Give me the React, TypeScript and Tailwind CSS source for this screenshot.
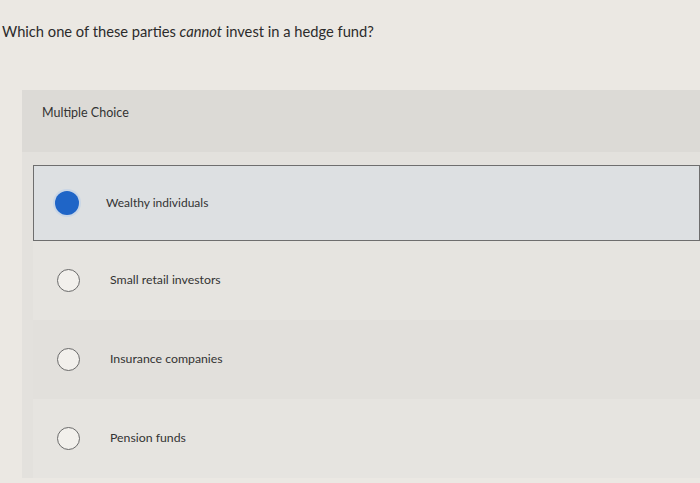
const options = [
  "Wealthy individuals",
  "Small retail investors",
  "Insurance companies",
  "Pension funds",
];

const App = () => {
  const selected = 0;
  return (
    <div
      className="w-[700px] h-[483px] overflow-hidden bg-[#ebe8e3] text-[#2b2b2b]"
      style={{ fontFamily: "Lato, 'Open Sans', sans-serif" }}
    >
      <h1 className="pl-[2px] pt-[20px] text-[14.7px] leading-[22px]">
        Which one of these parties <em>cannot</em> invest in a hedge fund?
      </h1>
      <div className="mt-[48px] ml-[22px] bg-[#e3e1dd]">
        <div className="h-[62px] bg-[#dcdad6] pl-[20px] pt-[14px] text-[12.5px] text-[#333]">
          Multiple Choice
        </div>
        <div className="pt-[13px]">
          {options.map((label, i) =>
            i === selected ? (
              <div
                key={label}
                className="ml-[11px] h-[76px] flex items-center border border-[#6e6e6e] bg-[#dde0e2]"
              >
                <span className="ml-[21px] w-[24px] h-[24px] rounded-full bg-[#1f65c7] ring-2 ring-[#c9d6e6]" />
                <span className="ml-[27px] text-[12px] text-[#333]">{label}</span>
              </div>
            ) : (
              <div
                key={label}
                className={`ml-[11px] h-[79px] flex items-center ${
                  i % 2 === 1 ? "bg-[#e6e4e0]" : "bg-[#e2e0dc]"
                }`}
              >
                <span className="ml-[24px] w-[23px] h-[23px] rounded-full border-[1.5px] border-[#6a6a6a] bg-[#f2f0ec]" />
                <span className="ml-[30px] text-[12.3px] text-[#333]">{label}</span>
              </div>
            )
          )}
        </div>
      </div>
    </div>
  );
};

export default App;
